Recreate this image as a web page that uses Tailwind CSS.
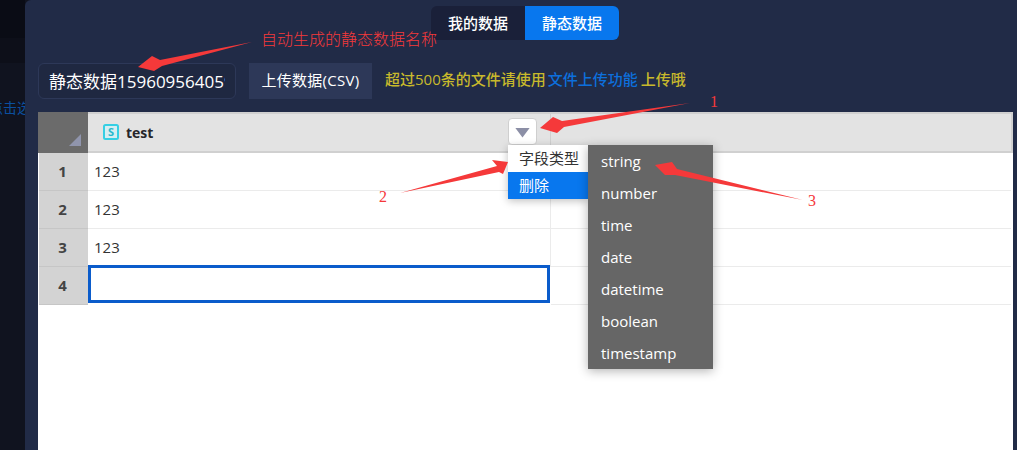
<!DOCTYPE html>
<html lang="zh">
<head>
    <meta charset="UTF-8">
    <title>静态数据</title>
    <script src="https://cdn.jsdelivr.net/npm/@tailwindcss/browser@4"></script>
</head>
<body class="relative flex h-[450px] w-[1017px] overflow-hidden bg-[#10131f] font-['Open_Sans','Noto_Sans_CJK_SC',sans-serif]">

    <!-- page behind the dialog -->
    <aside class="flex w-[25px] shrink-0 flex-col overflow-hidden">
        <div class="h-[38px] bg-[#0a0c15]"></div>
        <div class="h-[25px] bg-[#0d0f19]"></div>
        <div class="flex-1 bg-[#10131f] pt-[36px] text-[14px] leading-[18px] whitespace-nowrap text-[#0b4f9e]">
            <span class="-ml-[11px] block">点击选</span>
        </div>
    </aside>

    <!-- dialog -->
    <main class="flex flex-1 flex-col rounded-tl-md bg-[#212b47] pr-[4px] pl-[13px]">
        <div class="flex justify-center pt-[6px] pr-[1px] text-[15px] font-medium text-white">
            <button class="h-[34px] w-[94px] rounded-l-md bg-[#1a2039]">我的数据</button>
            <button class="h-[34px] w-[94px] rounded-r-md bg-[#0877ee]">静态数据</button>
        </div>

        <div class="mt-[23px] flex h-[36px] items-center">
            <input class="h-full w-[198px] rounded-md border border-[#2d3858] bg-[#1f2841] px-[10px] pb-[2px] text-[17px] text-white outline-none" value="静态数据1596095640591">
            <button class="ml-[13px] h-full w-[123px] bg-[#2d3858] pb-[2px] text-[15px] tracking-[0.3px] text-white">上传数据(CSV)</button>
            <p class="mb-[3px] ml-[13px] text-[15px] font-medium text-[#c8b92c]">超过500条的文件请使用<span class="mr-[3px] ml-[2px] text-[#0d6fdc]">文件上传功能</span>上传哦</p>
        </div>

        <!-- sheet -->
        <div class="mt-[13px] flex-1 bg-white">
            <div class="flex h-[41px] border-y-2 border-r-2 border-[#d0d0d0] bg-[#e3e3e3]">
                <div class="relative -my-[2px] w-[50px] bg-[#6b6b6b]">
                    <span class="absolute right-[7px] bottom-[7px] h-[12px] w-[12px] bg-[#9095ad] [clip-path:polygon(100%_0,100%_100%,0_100%)]"></span>
                </div>
                <div class="relative flex w-[463px] items-center gap-[7px] border-r border-[#d0d0d0] pb-[1px] pl-[15px]">
                    <svg width="16" height="16" viewBox="0 0 16 16" class="shrink-0">
                        <rect x="1" y="1" width="14" height="14" rx="1.5" fill="#d6eef2" stroke="#35cfe4" stroke-width="2"/>
                        <text x="8" y="12" text-anchor="middle" font-size="11" font-weight="700" font-family="Open Sans" fill="#28b8cc">S</text>
                    </svg>
                    <span class="text-[14px] font-bold text-[#26262b]">test</span>
                    <button class="absolute top-[4px] left-[420px] z-10 flex h-[27px] w-[29px] items-center justify-center rounded-sm border border-[#cfcfcf] bg-white">
                        <span class="mt-[2px] h-[10px] w-[15px] bg-[#8c8fa6] [clip-path:polygon(0_0,100%_0,50%_100%)]"></span>
                    </button>
                </div>
                <div class="flex-1"></div>
            </div>

            <div class="grid grid-cols-[50px_463px_1fr] pr-[2px] text-[15px] text-[#333]">
                <div class="ml-[1px] flex h-[38px] items-center justify-center border-b border-[#c6c6c6] bg-[#d3d3d3] pr-[2px] text-[15px] font-bold text-[#444]">1</div>
                <div class="flex h-[38px] items-center border-r border-b border-[#ebebeb] pl-[6px]">123</div>
                <div class="h-[38px] border-b border-[#ebebeb]"></div>
                <div class="ml-[1px] flex h-[38px] items-center justify-center border-b border-[#c6c6c6] bg-[#d3d3d3] pr-[2px] text-[15px] font-bold text-[#444]">2</div>
                <div class="flex h-[38px] items-center border-r border-b border-[#ebebeb] pl-[6px]">123</div>
                <div class="h-[38px] border-b border-[#ebebeb]"></div>
                <div class="ml-[1px] flex h-[38px] items-center justify-center border-b border-[#c6c6c6] bg-[#d3d3d3] pr-[2px] text-[15px] font-bold text-[#444]">3</div>
                <div class="flex h-[38px] items-center border-r border-b border-[#ebebeb] pl-[6px]">123</div>
                <div class="h-[38px] border-b border-[#ebebeb]"></div>
                <div class="ml-[1px] flex h-[38px] items-center justify-center border-b border-[#c6c6c6] bg-[#d3d3d3] pr-[2px] text-[15px] font-bold text-[#444]">4</div>
                <div class="-mt-[2px] mr-[1px] h-[38px] border-[3px] border-[#0b5ccb]"></div>
                <div class="h-[38px] border-b border-[#ebebeb]"></div>
            </div>
        </div>
    </main>

    <!-- column menu -->
    <div class="absolute top-[145px] left-[508px] z-10 w-[80px] bg-white text-[15px] leading-[27px] text-[#333] shadow-[0_2px_8px_rgba(0,0,0,0.25)]">
        <div class="h-[27px] pl-[11px]">字段类型</div>
        <div class="h-[27px] bg-[#0877ee] pl-[11px] text-white">删除</div>
    </div>
    <ul class="absolute top-[145px] left-[588px] z-10 w-[125px] bg-[#666666] text-[15px] leading-[32px] text-white shadow-[0_2px_10px_rgba(0,0,0,0.3)]">
        <li class="h-[32px] pl-[13px]">string</li>
        <li class="h-[32px] pl-[13px]">number</li>
        <li class="h-[32px] pl-[13px]">time</li>
        <li class="h-[32px] pl-[13px]">date</li>
        <li class="h-[32px] pl-[13px]">datetime</li>
        <li class="h-[32px] pl-[13px]">boolean</li>
        <li class="h-[32px] pl-[13px]">timestamp</li>
    </ul>

    <!-- annotations drawn over the screenshot -->
    <svg class="absolute top-0 left-0 z-20" width="1017" height="450" viewBox="0 0 1017 450">
        <g fill="#f5393a">
            <polygon points="252,42 160,60 152,56 138,67 154,71 162,66"/>
            <polygon points="690,103 562,121 553,117 540,128 557,133 564,127"/>
            <polygon points="400,193 497,166 492,160 508,162 503,174 499,172"/>
            <polygon points="803,200 677,169 672,162 655,165 665,175 675,175"/>
        </g>
    </svg>
    <span class="absolute top-[28px] left-[261px] z-20 text-[16px] leading-[22px] font-light text-[#f5393a]">自动生成的静态数据名称</span>
    <span class="absolute top-[92px] left-[710px] z-20 font-['Liberation_Serif'] text-[16px] leading-[20px] text-[#f5393a]">1</span>
    <span class="absolute top-[187px] left-[379px] z-20 font-['Liberation_Serif'] text-[16px] leading-[20px] text-[#f5393a]">2</span>
    <span class="absolute top-[191px] left-[808px] z-20 font-['Liberation_Serif'] text-[16px] leading-[20px] text-[#f5393a]">3</span>
</body>
</html>
